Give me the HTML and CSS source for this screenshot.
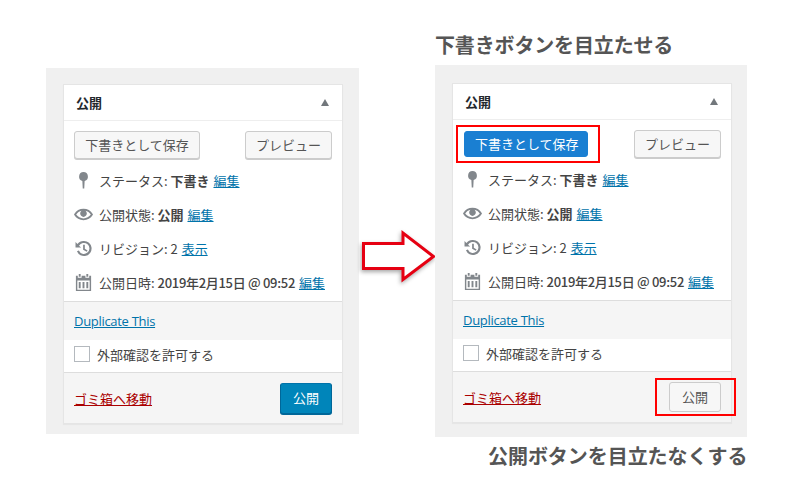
FILE: index.html
```html
<!DOCTYPE html>
<html lang="ja">
<head>
<meta charset="utf-8">
<title>公開</title>
<link rel="stylesheet" href="styles.css">
</head>
<body>
<main class="stage">
  <section class="panel panel-left">
    <div class="card">
      <div class="card-head"><h2>公開</h2><span class="caret"></span></div>
      <div class="actions">
        <button class="btn">下書きとして保存</button>
        <button class="btn">プレビュー</button>
      </div>
      <div class="rows">
        <div class="row"><svg class="ico" viewBox="0 0 20 20"><path d="M10 1a4.800 4.800 0 0 0-1.200 9.400L9.200 18.500h1.600l.4-8.100A4.800 4.800 0 0 0 10 1z"/></svg><span>ステータス: <b>下書き</b> <a href="#">編集</a></span></div>
        <div class="row"><svg class="ico" viewBox="0 0 20 20"><path d="M19.7 9.4C17.7 6 14.1 4 10 4S2.3 6 .3 9.4L0 10l.3.6c2 3.4 5.6 5.4 9.7 5.4s7.7-2 9.7-5.4l.3-.6-.3-.6zM10 14.1c-3.1 0-6-1.6-7.7-4.1C3.6 8 5.7 6.6 8 6.1c-.9.6-1.5 1.7-1.5 2.9 0 1.9 1.6 3.5 3.5 3.5s3.500-1.6 3.5-3.5c0-1.2-.6-2.3-1.5-2.9 2.3.5 4.4 1.9 5.7 3.9-1.7 2.5-4.6 4.1-7.7 4.1z"/></svg><span>公開状態: <b>公開</b> <a href="#">編集</a></span></div>
        <div class="row"><svg class="ico" viewBox="0 0 20 20"><path d="M10.5 2a8 8 0 1 1-7.4 11l2-.8a5.8 5.8 0 1 0 .2-5L7.5 9H1.6V3.2l2 2A8 8 0 0 1 10.500 2zM9.600 6h1.800v4.300l2.900 1.700-.9 1.500-3.800-2.300z"/></svg><span>リビジョン: 2 <a href="#">表示</a></span></div>
        <div class="row"><svg class="ico" viewBox="0 0 20 20"><path d="M5 1h2v3H5zM13 1h2v3h-2zM2 3h2v2h4V3h4v2h4V3h2v16H2zm1.500 5v9.500h13V8zM5 9.500h2V16H5zm4 0h2V16H9zm4 0h2V16h-2z" fill-rule="evenodd"/></svg><span><span>公開日時:</span> <b class="date">2019年2月15日 @ 09:52</b> <a href="#">編集</a></span></div>
      </div>
      <div class="extra"><a href="#" class="dup">Duplicate This</a></div>
      <label class="check"><span class="box"></span>外部確認を許可する</label>
      <div class="foot"><a href="#" class="trash">ゴミ箱へ移動</a><button class="btn btn-primary">公開</button></div>
    </div>
  </section>

  <svg class="arrow" viewBox="0 0 80 60"><path d="M3.500 15.500H43V5L73.500 28.500 43 51.500V40.500H3.500z"/></svg>

  <h1 class="note note-top">下書きボタンを目立たせる</h1>
  <section class="panel panel-right">
    <div class="card">
      <div class="card-head"><h2>公開</h2><span class="caret"></span></div>
      <div class="actions">
        <button class="btn btn-draft">下書きとして保存</button>
        <button class="btn">プレビュー</button>
      </div>
      <div class="rows">
        <div class="row"><svg class="ico" viewBox="0 0 20 20"><path d="M10 1a4.800 4.800 0 0 0-1.200 9.400L9.200 18.500h1.600l.4-8.100A4.800 4.800 0 0 0 10 1z"/></svg><span>ステータス: <b>下書き</b> <a href="#">編集</a></span></div>
        <div class="row"><svg class="ico" viewBox="0 0 20 20"><path d="M19.7 9.4C17.7 6 14.1 4 10 4S2.3 6 .3 9.4L0 10l.3.6c2 3.4 5.6 5.4 9.7 5.4s7.7-2 9.7-5.4l.3-.6-.3-.6zM10 14.1c-3.1 0-6-1.6-7.7-4.1C3.6 8 5.7 6.6 8 6.1c-.9.6-1.5 1.7-1.5 2.9 0 1.9 1.6 3.5 3.5 3.5s3.500-1.6 3.5-3.5c0-1.2-.6-2.3-1.5-2.9 2.3.5 4.4 1.9 5.7 3.9-1.7 2.5-4.6 4.1-7.7 4.1z"/></svg><span>公開状態: <b>公開</b> <a href="#">編集</a></span></div>
        <div class="row"><svg class="ico" viewBox="0 0 20 20"><path d="M10.5 2a8 8 0 1 1-7.4 11l2-.8a5.8 5.8 0 1 0 .2-5L7.5 9H1.6V3.2l2 2A8 8 0 0 1 10.500 2zM9.600 6h1.800v4.300l2.900 1.700-.9 1.500-3.800-2.300z"/></svg><span>リビジョン: 2 <a href="#">表示</a></span></div>
        <div class="row"><svg class="ico" viewBox="0 0 20 20"><path d="M5 1h2v3H5zM13 1h2v3h-2zM2 3h2v2h4V3h4v2h4V3h2v16H2zm1.500 5v9.500h13V8zM5 9.500h2V16H5zm4 0h2V16H9zm4 0h2V16h-2z" fill-rule="evenodd"/></svg><span><span>公開日時:</span> <b class="date">2019年2月15日 @ 09:52</b> <a href="#">編集</a></span></div>
      </div>
      <div class="extra"><a href="#" class="dup">Duplicate This</a></div>
      <label class="check"><span class="box"></span>外部確認を許可する</label>
      <div class="foot"><a href="#" class="trash">ゴミ箱へ移動</a><button class="btn btn-ghost">公開</button></div>
      <span class="frame frame-draft"></span>
      <span class="frame frame-publish"></span>
    </div>
  </section>
  <h1 class="note note-bottom">公開ボタンを目立たなくする</h1>
</main>
</body>
</html>
```
FILE: styles.css
```css
* { box-sizing: border-box; }
html, body { margin: 0; background: #fff; }
.stage {
  position: relative;
  width: 790px;
  height: 500px;
  overflow: hidden;
  font-family: "Noto Sans CJK JP", "Noto Sans", sans-serif;
  font-size: 13px;
  color: #444;
}
.panel { position: absolute; background: #f0f0f0; }
.panel-left { left: 46px; top: 68px; width: 313px; height: 366px; padding: 16px 17px; }
.panel-right { left: 435px; top: 65px; width: 312px; height: 372px; padding: 18px 15px 0 17px; }
.card {
  position: relative;
  width: 280px;
  height: 340px;
  background: #fff;
  border: 1px solid #e5e5e5;
  box-shadow: 0 1px 1px rgba(0, 0, 0, .04);
  display: flex;
  flex-direction: column;
}
.card-head {
  height: 36px;
  flex: none;
  padding: 0 12px;
  border-bottom: 1px solid #eee;
  display: flex;
  align-items: center;
  justify-content: space-between;
}
.card-head h2 { margin: 0; font-size: 13px; font-weight: 700; color: #23282d; line-height: 1; }
.caret {
  width: 0; height: 0;
  margin-right: 1px;
  border-left: 4px solid transparent;
  border-right: 4px solid transparent;
  border-bottom: 7px solid #72777c;
}
.actions { flex: none; display: flex; justify-content: space-between; align-items: center; padding: 10px 10px 0; }
.btn {
  height: 28px;
  margin: 0;
  padding: 0 10px;
  font: inherit;
  line-height: 26px;
  color: #555;
  background: #f7f7f7;
  border: 1px solid #ccc;
  border-radius: 3px;
  box-shadow: 0 1px 0 #ccc;
  white-space: nowrap;
}
.actions .btn:first-child { width: 126px; }
.actions .btn:last-child { width: 87px; }
.actions .btn-draft:first-child { width: 124px; margin-left: 1px; }
.btn-draft {
  height: 26px;
  line-height: 24px;
  background: #1a7fd2;
  border-color: #1a7fd2;
  box-shadow: none;
  color: #fff;
}
.rows { flex: none; height: 142px; padding-top: 4px; display: flex; flex-direction: column; }
.row { height: 34px; flex: none; display: flex; align-items: center; padding-left: 10px; gap: 6px; white-space: nowrap; }
.ico { width: 19px; height: 19px; fill: #82878c; flex: none; }
.row b { color: #444; }
.row b.date { font-weight: 500; letter-spacing: -.3px; }
.row a { margin-left: 1px; }
a { color: #0073aa; }
.extra { height: 39px; flex: none; background: #f5f5f5; border-top: 1px solid #ddd; padding: 0 10px; display: flex; align-items: center; }
.dup { font-family: "Open Sans", "Noto Sans", sans-serif; font-size: 13px; letter-spacing: -.3px; }
.check { height: 32px; flex: none; display: flex; align-items: center; gap: 7px; padding: 0 0 4px 10px; }
.box { width: 16px; height: 16px; background: #fff; border: 1px solid #b4b9be; }
.foot {
  flex: 1;
  display: flex;
  justify-content: space-between;
  align-items: center;
  padding: 0 10px;
  background: #f5f5f5;
  border-top: 1px solid #ddd;
}
.trash { color: #a00; }
.foot .btn { width: 52px; padding: 0; height: 31px; }
.btn-primary { background: #0085ba; border-color: #0073aa #006799 #006799; box-shadow: 0 1px 0 #006799; color: #fff; }
.foot .btn-ghost { height: 30px; background: #f7f7f7; border-color: #ccc; box-shadow: none; color: #555; }
.frame { position: absolute; border: 2px solid #f00; pointer-events: none; }
.frame-draft { left: 3px; top: 41px; width: 144px; height: 38px; }
.frame-publish { left: 202px; top: 294px; width: 81px; height: 38px; }
.arrow {
  position: absolute;
  left: 360px; top: 228px;
  width: 80px; height: 60px;
  overflow: visible;
  fill: #fff;
  stroke: #e60012;
  stroke-width: 3;
  filter: drop-shadow(-1px 2px 2px rgba(0, 0, 0, .35));
}
.note { position: absolute; margin: 0; font-size: 20px; font-weight: 700; line-height: 28px; letter-spacing: -.15px; color: #555; white-space: nowrap; }
.note-top { left: 435px; top: 31px; }
.note-bottom { left: 488px; top: 442px; letter-spacing: -.05px; }
```
